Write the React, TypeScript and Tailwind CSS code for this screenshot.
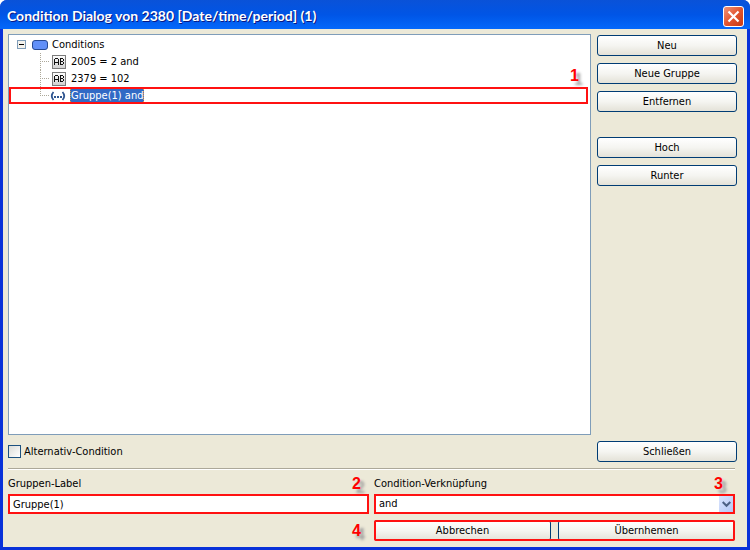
import type { ReactNode } from "react";

const buttonFace =
  "h-[21px] rounded-[3px] border border-[#003c74] bg-linear-to-b from-white via-[#f5f5f1] to-[#e4e2d8] text-center leading-4";

function PushButton({ children, className = "" }: { children: ReactNode; className?: string }) {
  return (
    <button type="button" className={`${buttonFace} ${className}`}>
      {children}
    </button>
  );
}

function Callout({ children }: { children: ReactNode }) {
  return (
    <span className="font-['Liberation_Sans',Arial,sans-serif] text-[16px] leading-4 font-bold text-[#f00] [text-shadow:4px_4px_3px_#9a9a9a]">
      {children}
    </span>
  );
}

function Branch({ last = false }: { last?: boolean }) {
  return (
    <svg width="10" height="17" viewBox="0 0 10 17" shapeRendering="crispEdges" aria-hidden="true">
      <path d={last ? "M.5 0V9" : "M.5 0V17"} stroke="#aca899" strokeDasharray="1 1" />
      <path d="M0 8.500H10" stroke="#aca899" strokeDasharray="1 1" />
    </svg>
  );
}

function FieldIcon() {
  return (
    <svg width="14" height="14" viewBox="0 0 14 14" fill="none" shapeRendering="crispEdges" aria-hidden="true">
      <defs>
        <linearGradient id="field-face" x1="0" y1="0" x2="0" y2="1">
          <stop offset="0" stopColor="#fff" />
          <stop offset="1" stopColor="#cfcfcf" />
        </linearGradient>
      </defs>
      <rect x=".5" y=".5" width="13" height="13" fill="url(#field-face)" stroke="#7c7c7c" />
      <g fill="#111">
        <rect x="2" y="4" width="1" height="6" />
        <rect x="3" y="3" width="3" height="1" />
        <rect x="6" y="4" width="1" height="6" />
        <rect x="3" y="7" width="3" height="1" />
        <rect x="8" y="3" width="1" height="7" />
        <rect x="9" y="3" width="2" height="1" />
        <rect x="9" y="6" width="2" height="1" />
        <rect x="9" y="9" width="2" height="1" />
        <rect x="11" y="4" width="1" height="2" />
        <rect x="11" y="7" width="1" height="2" />
      </g>
    </svg>
  );
}

function GroupIcon() {
  return (
    <svg width="16" height="14" viewBox="0 0 16 14" fill="none" stroke="#2f5590" strokeWidth="1.800" aria-hidden="true">
      <path d="M3.500 3Q0 7 3.500 11M12.500 3Q16 7 12.500 11" />
      <path d="M4 8H6M7 8H9M10 8H12" strokeWidth="2" />
    </svg>
  );
}

export default function App() {
  return (
    <div className="min-h-screen bg-white font-['DejaVu_Sans_Condensed','Noto_Sans',sans-serif] text-[11px] leading-4 text-black">
      <div className="flex min-h-screen flex-col overflow-hidden rounded-t-[7px] bg-[#0831d9]">
        <header className="flex h-[29px] items-center justify-between bg-linear-to-b from-[#0a52d8] via-[#0055e6] to-[#0468fb] pr-[6px] pl-[7px]">
          <h1 className="pt-[3px] font-['Lato','Noto_Sans',sans-serif] text-[14px] leading-5 font-bold text-white [text-shadow:1px_1px_0_#0a1883]">
            Condition Dialog von 2380 [Date/time/period] (1)
          </h1>
          <button
            type="button"
            aria-label="Close"
            className="mt-[3px] flex size-[21px] items-center justify-center rounded-[3px] border border-white bg-linear-to-br from-[#ee9276] via-[#e2552f] to-[#c83a12]"
          >
            <svg width="13" height="13" viewBox="0 0 13 13" stroke="white" strokeWidth="2.200" aria-hidden="true">
              <path d="M1.500 1.500L11.500 11.500M11.500 1.500L1.500 11.500" />
            </svg>
          </button>
        </header>

        <main className="mx-[3px] mb-[3px] flex flex-1 flex-col bg-[#ece9d8] pt-[5px] pl-[5px]">
          <div className="flex flex-1 gap-[6px] pr-[10px]">
            <div className="relative flex-1 border border-[#7f9db9] bg-white pt-px">
              <ul>
                <li>
                  <div className="flex h-[17px] items-center pl-2">
                    <svg width="9" height="9" viewBox="0 0 9 9" shapeRendering="crispEdges" aria-hidden="true">
                      <rect x=".5" y=".5" width="8" height="8" fill="#f4f2ec" stroke="#7f9db9" />
                      <path d="M2 4.500H7" stroke="#000" />
                    </svg>
                    <svg className="ml-[6px]" width="16" height="10" viewBox="0 0 16 10" aria-hidden="true">
                      <rect x=".5" y=".5" width="15" height="9" rx="2.500" fill="#6290f8" stroke="#274a93" />
                    </svg>
                    <span className="ml-1">Conditions</span>
                  </div>
                  <ul className="pl-[31px]">
                    <li className="flex h-[17px] items-center">
                      <Branch />
                      <span className="ml-[2px]"><FieldIcon /></span>
                      <span className="ml-[5px]">2005 = 2 and</span>
                    </li>
                    <li className="flex h-[17px] items-center">
                      <Branch />
                      <span className="ml-[2px]"><FieldIcon /></span>
                      <span className="ml-[5px]">2379 = 102</span>
                    </li>
                    <li className="flex h-[17px] items-center">
                      <Branch last />
                      <GroupIcon />
                      <span className="ml-1 border border-dotted border-[#d09a4a] bg-[#316ac5] leading-[14px] text-white">
                        Gruppe(1) and
                      </span>
                    </li>
                  </ul>
                </li>
              </ul>
              <div className="pointer-events-none absolute inset-x-0 top-[52px] mr-[2px] h-[17px] border-2 border-[#f11]" />
              <div className="absolute top-[33px] right-[11px] flex">
                <Callout>1</Callout>
              </div>
            </div>

            <div className="flex w-[140px] flex-col gap-[7px] pt-px">
              <PushButton>Neu</PushButton>
              <PushButton>Neue Gruppe</PushButton>
              <PushButton>Entfernen</PushButton>
              <PushButton className="mt-[18px]">Hoch</PushButton>
              <PushButton>Runter</PushButton>
            </div>
          </div>

          <div className="mt-[6px] flex items-center justify-between pr-[10px]">
            <label className="flex items-center gap-[3px]">
              <input
                type="checkbox"
                className="size-[13px] appearance-none border border-[#1c5180] bg-linear-to-br from-[#dcdcd7] to-white"
              />
              Alternativ-Condition
            </label>
            <PushButton className="w-[140px]">Schließen</PushButton>
          </div>

          <hr className="mt-[6px] mr-3 h-[2px] border-t border-b border-t-[#aca899] border-b-white" />

          <div className="mt-[3px] mr-3 mb-[6px] grid grid-cols-2 gap-x-[5px]">
            <div className="flex h-[21px] items-center justify-between pr-2">
              <label htmlFor="group-label">Gruppen-Label</label>
              <Callout>2</Callout>
            </div>
            <div className="flex h-[21px] items-center justify-between pr-3">
              <label htmlFor="condition-link">Condition-Verknüpfung</label>
              <Callout>3</Callout>
            </div>
            <input
              id="group-label"
              type="text"
              defaultValue="Gruppe(1)"
              className="h-5 w-full border-2 border-[#f11] bg-white px-[3px]"
            />
            <div className="relative h-5">
              <select
                id="condition-link"
                defaultValue="and"
                className="block h-5 w-full appearance-none border-2 border-[#f11] bg-white px-[3px]"
              >
                <option>and</option>
                <option>or</option>
              </select>
              <span className="pointer-events-none absolute inset-y-[2px] right-[2px] flex w-[14px] items-center justify-center bg-linear-to-br from-[#dbe5fd] to-[#b4c8f6]">
                <svg width="9" height="7" viewBox="0 0 9 7" fill="none" stroke="#4d6185" strokeWidth="2" aria-hidden="true">
                  <path d="M.7 1L4.500 4.800L8.300 1" />
                </svg>
              </span>
            </div>
            <div className="mt-[6px] flex h-[21px] items-center justify-end pr-2">
              <Callout>4</Callout>
            </div>
            <div className="relative mt-[6px] flex gap-[7px]">
              <PushButton className="flex-1">Abbrechen</PushButton>
              <PushButton className="flex-1">Übernhemen</PushButton>
              <div className="pointer-events-none absolute inset-0 rounded-[2px] border-2 border-[#f11]" />
            </div>
          </div>
        </main>
      </div>
    </div>
  );
}
